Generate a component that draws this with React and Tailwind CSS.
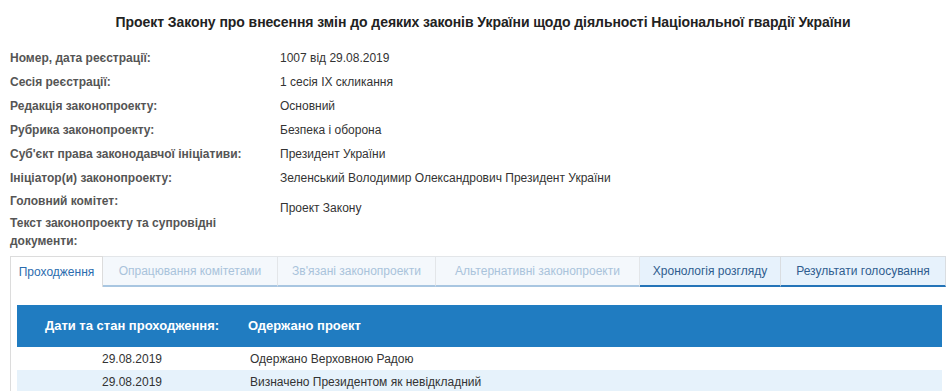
import React from 'react'

const info = [
  ['Номер, дата реєстрації:', '1007 від 29.08.2019'],
  ['Сесія реєстрації:', '1 сесія IX скликання'],
  ['Редакція законопроекту:', 'Основний'],
  ['Рубрика законопроекту:', 'Безпека і оборона'],
  ["Суб'єкт права законодавчої ініціативи:", 'Президент України'],
  ['Ініціатор(и) законопроекту:', 'Зеленський Володимир Олександрович Президент України'],
]

const tabs = [
  { label: 'Проходження', w: 'w-[93px]', kind: 'active' },
  { label: 'Опрацювання комітетами', w: 'w-[175px]', kind: 'off' },
  { label: "Зв'язані законопроекти", w: 'w-[158px]', kind: 'off' },
  { label: 'Альтернативні законопроекти', w: 'w-[204px]', kind: 'off' },
  { label: 'Хронологія розгляду', w: 'w-[141px]', kind: 'on' },
  { label: 'Результати голосування', w: 'w-[165px]', kind: 'on' },
]

const tabClass = {
  active: 'bg-white text-[#2b6cae] border-x border-t border-[#dcdcdc] h-[31px]',
  off: 'bg-[#f4f8fc] text-[#a9c3db] border-t border-r border-[#e3e6e9] border-b-2 border-b-[#a8c6e1] h-[31px]',
  on: 'bg-[#e7f2fc] text-[#2f5d8f] border-t border-r border-[#d9dde1] border-b-2 border-b-[#2474b8] h-[31px]',
}

const rows = [
  ['29.08.2019', 'Одержано Верховною Радою'],
  ['29.08.2019', 'Визначено Президентом як невідкладний'],
]

export default function App() {
  return (
    <div className="w-[946px] h-[391px] overflow-hidden bg-white text-[12px] text-[#333] font-['Liberation_Sans',Arial,sans-serif]">
      <h1 className="h-[46px] pt-[14px] pl-[20px] text-center text-[14px] font-bold text-[#222] leading-[16px] tracking-[-0.06px]">
        Проект Закону про внесення змін до деяких законів України щодо діяльності Національної гвардії України
      </h1>

      <div className="pl-[10px]">
        {info.map(([k, v]) => (
          <div key={k} className="flex h-[24px] items-center">
            <div className="w-[270px] font-bold text-[#555]">{k}</div>
            <div>{v}</div>
          </div>
        ))}
        <div className="flex">
          <div className="w-[270px] font-bold text-[#555] leading-[18px]">
            <div className="mt-[2px]">Головний комітет:</div>
            <div className="mt-[4px] w-[220px]">Текст законопроекту та супровідні документи:</div>
          </div>
          <div className="pt-[9px] leading-[18px]">Проект Закону</div>
        </div>
      </div>

      <div className="mt-[6px] ml-[10px] flex items-end">
        {tabs.map((t) => (
          <div
            key={t.label}
            className={`${t.w} ${tabClass[t.kind]} shrink-0 flex items-center justify-center text-[12px]`}
          >
            {t.label}
          </div>
        ))}
      </div>

      <div className="ml-[10px] border-l border-[#dcdcdc] pl-[6px] pr-[4px] pt-[18px]">
        <div className="flex h-[42px] items-center bg-[#207cc1] text-[13px] font-bold text-white">
          <div className="w-[230px] text-center">Дати та стан проходження:</div>
          <div className="pl-[1px]">Одержано проект</div>
        </div>
        {rows.map(([d, s], i) => (
          <div key={s} className={`flex h-[23px] items-center ${i % 2 ? 'bg-[#e6f2fb]' : 'bg-white'}`}>
            <div className="w-[230px] text-center">{d}</div>
            <div className="pl-[3px]">{s}</div>
          </div>
        ))}
      </div>
    </div>
  )
}
